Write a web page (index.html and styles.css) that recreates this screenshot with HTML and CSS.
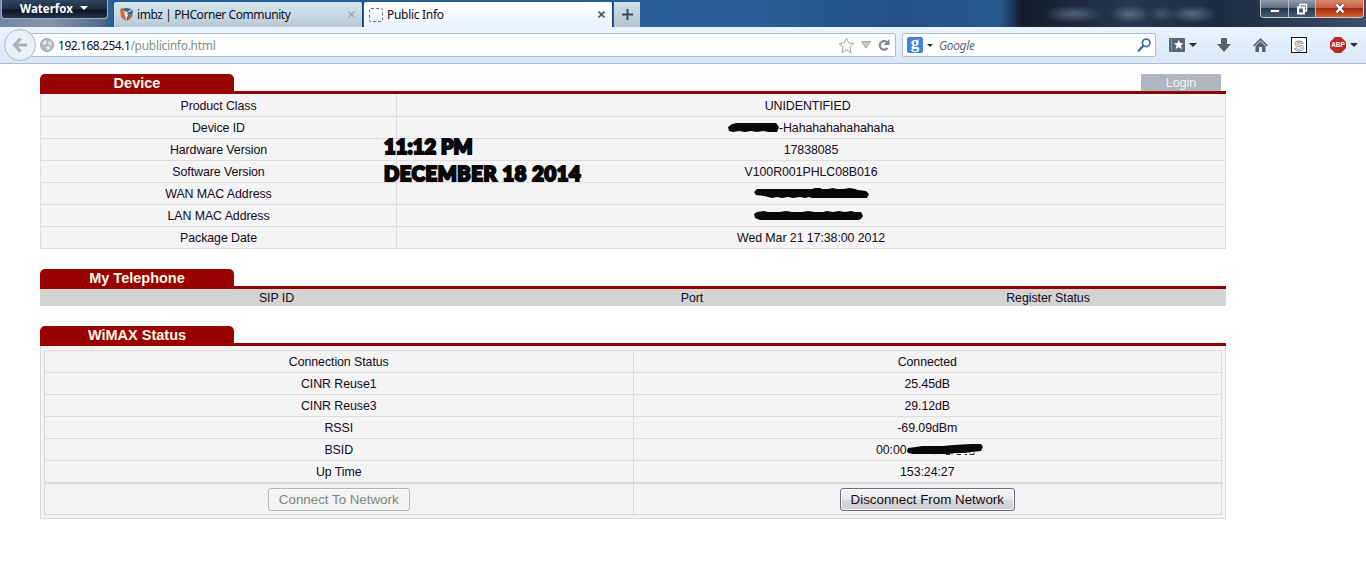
FILE: index.html
```
<!DOCTYPE html>
<html lang="en">
<head>
    <meta charset="UTF-8">
    <title>Public Info</title>
    <link rel="stylesheet" href="styles.css">
</head>
<body>
    <header class="browser">
        <div class="titlebar">
            <div class="app-button">Waterfox <span class="arrow white"></span></div>
            <div class="tab">
                <svg class="favicon" width="15" height="15" viewBox="0 0 15 15"><path d="M1 3l6 3v8l-5-4z" fill="#d9683a"/><path d="M8 6l6-3-1 7-5 4z" fill="#3d6290"/><path d="M2 2l5-1 6 1-5 3z" fill="#3d6290"/><path d="M1 2l3-1 2 3-3 1zM10 8l3-2-1 5-3 2z" fill="#c86543"/><path d="M5 6l3-1 1 4-2 2z" fill="#e9eef2"/></svg>
                <span class="tab-title">imbz | PHCorner Community</span>
                <svg class="close faded" width="7" height="7" viewBox="0 0 7 7"><path d="M.5.5l6 6m0-6l-6 6"/></svg>
            </div>
            <div class="tab active">
                <span class="blank-icon"></span>
                <span class="tab-title">Public Info</span>
                <svg class="close" width="7" height="7" viewBox="0 0 7 7"><path d="M.5.5l6 6m0-6l-6 6"/></svg>
            </div>
            <div class="new-tab"><svg width="11" height="11" viewBox="0 0 11 11"><path d="M5.5 0v11M0 5.5h11" stroke="#344b5c" stroke-width="2"/></svg></div>
            <div class="wallpaper"></div>
            <div class="window-buttons">
                <div class="win"><svg width="12" height="12" viewBox="0 0 12 12"><path d="M1.500 6.500h9v3h-9z" fill="#fff" stroke="#47505f"/></svg></div>
                <div class="win"><svg width="12" height="12" viewBox="0 0 12 12"><path d="M4 4V1.500h6.500V8H8.500" fill="none" stroke="#fff" stroke-width="1.500"/><path d="M2 4.500h6v6H2z" fill="#526173" stroke="#fff" stroke-width="2"/></svg></div>
                <div class="win quit"><svg width="12" height="11" viewBox="0 0 12 11"><path d="M2.500 1.500l7 8m0-8l-7 8" stroke="#5f3430" stroke-width="4"/><path d="M2.500 1.500l7 8m0-8l-7 8" stroke="#fff" stroke-width="2.500"/></svg></div>
            </div>
        </div>
        <div class="toolbar">
            <div class="back"><svg width="16" height="16" viewBox="0 0 16 16"><path d="M8.500 1.500L2.500 8l6 6.500M3 8h12" fill="none" stroke="#a9b1bb" stroke-width="3"/></svg></div>
            <div class="urlbar">
                <svg class="globe" width="14" height="14" viewBox="0 0 14 14"><circle cx="7" cy="7" r="6.500" fill="#b0b7c1" stroke="#9ba3af"/><path d="M2 5l4-3 1 3-3 2zM8 3l3 1 1 4-3-1zM6 9l3-1 1 3-3 1z" fill="#e7ebf0"/></svg>
                <span class="url">192.168.254.1<span class="path">/publicinfo.html</span></span>
                <svg width="17" height="17" viewBox="0 0 17 17"><path d="M8.500 1l2.200 5 5.300.5-4 3.700 1.200 5.600-4.700-3-4.700 3L5 10.200 1 6.500 6.300 6z" fill="#fbfbfc" stroke="#a1a5ad"/></svg>
                <svg class="drop" width="10" height="8" viewBox="0 0 10 8"><path d="M.5.5h9L5 7z" fill="#c7cacf" stroke="#a1a5ad"/></svg>
                <svg class="reload" width="12" height="12" viewBox="0 0 12 12"><path d="M9 3.200A4.300 4.300 0 1 0 9.500 9" fill="none" stroke="#838995" stroke-width="2.200"/><path d="M11.500 0v6h-6z" fill="#838995"/></svg>
            </div>
            <div class="search">
                <span class="google">g</span><span class="arrow small"></span>
                <span class="placeholder">Google</span>
                <svg width="14" height="14" viewBox="0 0 13 13"><circle cx="8.500" cy="4.500" r="3.500" fill="#fff" stroke="#416d9f" stroke-width="1.600"/><path d="M6 7L1 12.500" stroke="#416d9f" stroke-width="2.200"/></svg>
            </div>
            <div class="tools">
                <svg width="16" height="14" viewBox="0 0 16 14"><rect width="16" height="14" rx="1" fill="#596673"/><path d="M2.500 1v12" stroke="#8996a2"/><path d="M9.700 2l1.500 3 3.300.3-2.500 2.200.9 3.500-3.200-1.700L6.700 11l.8-3.500L5 5.300 8.200 5z" fill="#fff"/></svg>
                <span class="arrow"></span>
                <svg class="download" width="14" height="14" viewBox="0 0 14 14"><path d="M4 0h6v6h4l-7 8-7-8h4z" fill="#56616c"/></svg>
                <svg class="home" width="15" height="14" viewBox="0 0 15 14"><path d="M0 7.500L7.500 0 15 7.500l-1 1-6.500-6-6.500 6z" fill="#56616c"/><path d="M2.500 8l5-4.500 5 4.500v6H9V9H6v5H2.500z" fill="#56616c"/></svg>
                <svg class="stylish" width="16" height="16" viewBox="0 0 16 16"><rect x=".5" y=".5" width="15" height="15" fill="#fff" stroke="#101018"/><text x="8" y="13.500" class="stylish-letter">S</text></svg>
                <span class="abp">ABP</span>
                <span class="arrow"></span>
            </div>
        </div>
    </header>

    <main class="page">
        <div class="section-head">
            <h2>Device</h2>
            <a class="login">Login</a>
        </div>
        <table class="info device">
            <tr><td>Product Class</td><td>UNIDENTIFIED&nbsp;&nbsp;</td></tr>
            <tr><td>Device ID</td><td><svg class="scribble" width="51" height="10" viewBox="0 0 51 10"><path d="M4 1l5-1h39l3 4-2 5-8 0-6-1-6 1-6-1-6 1-6-1-6 1-4-1-1-4z"/></svg>-Hahahahahahahaha</td></tr>
            <tr><td>Hardware Version</td><td>17838085</td></tr>
            <tr><td>Software Version</td><td>V100R001PHLC08B016</td></tr>
            <tr><td>WAN MAC Address</td><td><svg class="scribble" width="115" height="11" viewBox="0 0 115 11"><path d="M3 1h55l3-1h5l2 1h6l5-1 4 1h6l7-1 5 1 3 1 8 1 3 3-2 4-6 0H58l-3-1-4 1-5-1-7 1-5-1-6 1-5-1-5 1-8-2-8-1-2-3z"/></svg></td></tr>
            <tr><td>LAN MAC Address</td><td><svg class="scribble" width="115" height="11" viewBox="0 0 115 11"><path d="M3 2l7-1 4 1h12l6-1 6 1h10l6-1 7 1h8l4-1 6 1 6-1 6 1 6-1 4 1h6l2 4-2 3-3 1H6l-5-2-1-4z"/></svg></td></tr>
            <tr><td>Package Date</td><td>Wed Mar 21 17:38:00 2012</td></tr>
        </table>

        <div class="section-head">
            <h2>My Telephone</h2>
        </div>
        <table class="phone">
            <tr><th>SIP ID</th><th>Port</th><th>Register Status</th></tr>
        </table>

        <div class="section-head">
            <h2>WiMAX Status</h2>
        </div>
        <div class="wimax-box">
            <table class="info wimax">
                <tr><td>Connection Status</td><td>Connected</td></tr>
                <tr><td>CINR Reuse1</td><td>25.45dB</td></tr>
                <tr><td>CINR Reuse3</td><td>29.12dB</td></tr>
                <tr><td>RSSI</td><td>-69.09dBm</td></tr>
                <tr><td>BSID</td><td>00:00<svg class="scribble bsid" width="76" height="12" viewBox="0 0 76 12"><path d="M1 4l8-1 6-1 20 0 12-1 17-1h10l2 3-2 4-9 1-8 1-8 0-8 1-6 0H6l-5-1-1-2z"/><path d="M27 9v1.500m12-1v1h4m2-1v1m5-1v1h4m4 0h2m3-1v1h4v-2" class="trace"/></svg></td></tr>
                <tr><td>Up Time</td><td>153:24:27</td></tr>
                <tr class="actions"><td><button disabled>Connect To Network</button></td><td><button>Disconnect From Network</button></td></tr>
            </table>
        </div>
        <!-- note written over the device table -->
        <div class="stamp"><span class="time">11:12 PM</span><span class="date">DECEMBER 18 2014</span></div>
    </main>
</body>
</html>
```
FILE: styles.css
```
* { box-sizing: border-box; }
body { margin: 0; background: #fff; color: #140a20; font: 12.4px "Liberation Sans", Arial, sans-serif; overflow: hidden; }
svg { display: block; flex: none; }

/* browser window */
.browser { font-family: "Noto Sans", sans-serif; }
.titlebar {
    display: flex;
    align-items: flex-end;
    height: 27px;
    background: linear-gradient(90deg, #7187a5 0, #8795ad 50px, #526b91 100px, #255b93 115px, #2a6097 750px, #235188 900px, #285a90 1000px, #121b2b 1022px, #27384e 1130px, #1c2a3e 1220px, #3d4f6c 1366px);
}
.app-button {
    align-self: flex-start;
    width: 107px;
    height: 19px;
    margin-left: 1px;
    margin-right: 6px;
    padding-left: 18px;
    border: 1px solid #a0adbf;
    border-top: 0;
    border-radius: 0 0 4px 4px;
    background: linear-gradient(#31455f, #202c40 50%, #0c1421 55%, #24334a);
    color: #fff;
    font-size: 11.5px;
    font-weight: bold;
    line-height: 17px;
}
.arrow { display: inline-block; flex: none; border: 4px solid transparent; border-top-color: #25303c; border-bottom: 0; }
.arrow.white { border-top-color: #fff; margin: 0 0 3px 4px; }
.arrow.small { border-width: 3px; border-bottom: 0; }
.tab {
    display: flex;
    align-items: center;
    width: 249px;
    height: 25px;
    margin-right: 1px;
    padding: 0 7px 0 5px;
    border-right: 1px solid #193f6b;
    border-radius: 2px 2px 0 0;
    background: linear-gradient(#d4e4ea, #c6d7e0 60%, #b7c8d3);
    font-size: 12px;
}
.tab.active { background: linear-gradient(#fff, #eaf3fc); }
.tab-title { flex: 1; margin-left: 3px; letter-spacing: -.42px; }
.blank-icon { width: 14px; height: 14px; border: 1px dashed #6d7480; border-radius: 2px; }
.active .tab-title { margin-left: 4px; letter-spacing: -.3px; }
.close { stroke: #4c5866; stroke-width: 1.6; }
.close.faded { stroke: #98a7b1; stroke-width: 1.2; }
.new-tab { display: flex; align-items: center; justify-content: center; width: 26px; height: 25px; background: linear-gradient(#cee0e8, #b4c4cf); }
.wallpaper {
    flex: 1;
    height: 27px;
    background:
        radial-gradient(ellipse 30px 9px at 434px 14px, #526176, transparent),
        radial-gradient(ellipse 20px 9px at 490px 14px, #5b6a7d, transparent),
        radial-gradient(ellipse 14px 8px at 522px 14px, #465568, transparent),
        radial-gradient(ellipse 24px 9px at 553px 14px, #5b6a7d, transparent);
}
.window-buttons { display: flex; align-self: flex-start; width: 104px; height: 18px; margin-right: 2px; border: 1px solid #c4ccd6; border-top: 0; border-radius: 0 0 4px 4px; overflow: hidden; }
.win { display: flex; align-items: center; justify-content: center; width: 28px; border-right: 1px solid #b2bbc8; background: linear-gradient(#929eac, #616f81 45%, #263548 50%, #4b5c70); }
.win + .win { width: 27px; }
.win.quit { flex: 1; border: 0; background: linear-gradient(#d78b70, #c95f40 45%, #a72911 50%, #d7652d); }

.toolbar { display: flex; align-items: center; height: 37px; padding-left: 4px; border-bottom: 1px solid #aabfd5; background: linear-gradient(#eaf4fe, #d9e7f4); font-size: 12px; }
.back { display: flex; align-items: center; justify-content: center; width: 32px; height: 32px; border: 1px solid #a8b9ca; border-radius: 50%; background: #e9f1f9; z-index: 1; }
.urlbar, .search { display: flex; align-items: center; height: 24px; border: 1px solid #acbdd0; border-radius: 2px; background: #fff; }
.urlbar { width: 865px; margin-left: -5px; padding: 0 5px 0 8px; }
.url { flex: 1; margin-left: 4px; letter-spacing: -.45px; }
.path { color: #829083; letter-spacing: -.3px; }
.drop { margin: 0 7px 0 6px; }
.search { width: 254px; margin-left: 6px; padding: 0 4px; }
.google { width: 16px; height: 16px; border-radius: 2px; background: #4284dc; color: #fff; font: bold 17px/11px "Liberation Serif", serif; text-align: center; }
.google + .arrow { margin-left: 4px; }
.placeholder { flex: 1; margin-left: 6px; padding-top: 1px; color: #5f6570; font-style: italic; letter-spacing: -.35px; }
.tools { display: flex; align-items: center; margin-left: 13px; }
.tools .arrow { margin-left: 4px; }
.download { margin-left: 20px; }
.home { margin-left: 22px; }
.stylish { margin-left: 23px; }
.abp {
    width: 16px;
    height: 16px;
    margin-left: 23px;
    background: #bb2a1e;
    clip-path: polygon(31% 0, 69% 0, 100% 31%, 100% 69%, 69% 100%, 31% 100%, 0 69%, 0 31%);
    color: #fff;
    font: bold 6.5px/16px "Liberation Sans", sans-serif;
    text-align: center;
}
.stylish-letter { fill: #fff; stroke: #8b9098; stroke-width: .8px; font: bold 15px "Liberation Sans", sans-serif; text-anchor: middle; }

/* router page */
.page { position: relative; width: 1186px; margin: 10px 0 0 40px; }
.section-head { display: flex; justify-content: space-between; height: 20px; border-bottom: 3px solid #900000; }
h2 { width: 194px; height: 20px; margin: 0; border-radius: 5px 5px 0 0; background: #990000; color: #fff8e6; font-size: 14.5px; line-height: 18px; text-align: center; }
.login { width: 80px; height: 17px; margin-right: 5px; background: #b0b7c1; color: #f2f4f6; font-size: 12.5px; line-height: 18px; text-align: center; }
table { width: 100%; border-spacing: 0; table-layout: fixed; }
td, th { padding: 0; font-weight: normal; text-align: center; letter-spacing: -.08px; }
.info { background: #f4f4f4; border-left: 1px solid #dcdcdc; }
.info td { height: 22px; padding-top: 1px; border-right: 1px solid #dcdcdc; border-bottom: 1px solid #dcdcdc; line-height: 20px; }
.device { margin-bottom: 20px; }
.device td:first-child { width: 356px; }
.device tr:first-child td { height: 23px; padding-top: 2px; }
.phone { height: 17px; margin-bottom: 20px; background: #d3d3d3; }
.phone th { padding-top: 1px; line-height: 16px; border-right: 1px solid #d8d8d8; }
.phone th:first-child { width: 474px; }
.phone th:nth-child(2) { width: 357px; }
.wimax-box { padding: 4px 3px 3px; border: 1px solid #dcdcdc; border-top: 0; background: #f4f4f4; }
.wimax { border-top: 1px solid #dcdcdc; }
.wimax .actions td { height: 32px; padding-top: 0; border-top: 1px solid #dcdcdc; line-height: 1; }
button { height: 23px; padding: 0 10px; border: 1px solid #686e80; border-radius: 3px; background: linear-gradient(#f4f4f4, #ebebeb 48%, #d9d9d9 52%, #d0d0d0); box-shadow: inset 0 0 0 1px #fbfbfb; color: #140a20; font: 13.33px "Liberation Sans", Arial, sans-serif; }
button:disabled { border-color: #adb7bf; background: #f4f4f4; color: #7f857f; }
.scribble { display: inline-block; margin-bottom: 2px; vertical-align: middle; fill: #080808; }
.bsid { margin-right: -4px; }
.trace { fill: none; stroke: #26262a; }

.stamp { position: absolute; left: 344px; top: 59px; display: flex; flex-direction: column; color: #080808; font: 900 20px/27px Lato, sans-serif; -webkit-text-stroke: 2.2px #080808; white-space: nowrap; }
.time { letter-spacing: .1px; }
.date { letter-spacing: .65px; }
```
